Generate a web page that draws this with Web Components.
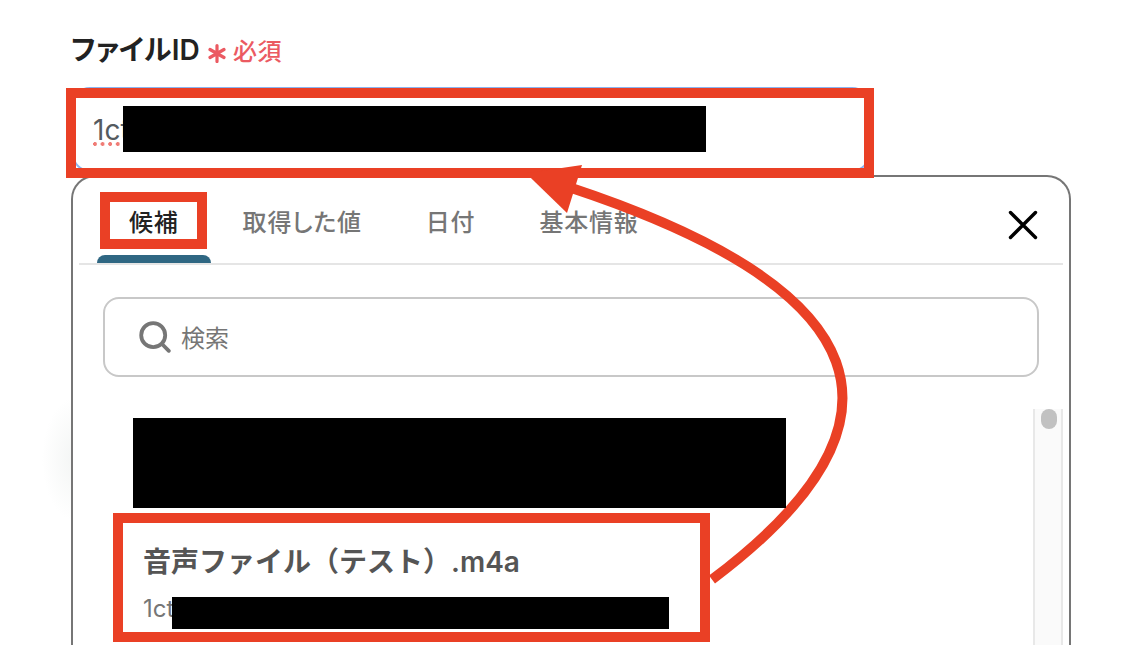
<!DOCTYPE html>
<html lang="ja">
<head>
<meta charset="utf-8">
<title>ファイルID</title>
<style>
  html, body {
    margin: 0;
    height: 645px;
    overflow: hidden;
    background: #fff;
  }

  body {
    position: relative;
    font-family: Inter, "Noto Sans CJK JP", sans-serif;
  }
</style>
</head>
<body>
<file-field>
  <field-label slot="label" note="必須">ファイルID</field-label>
  <text-input slot="input">1ct</text-input>
  <suggest-panel>
    <tab-bar slot="tabs">
      <tab-item active>候補</tab-item>
      <tab-item>取得した値</tab-item>
      <tab-item>日付</tab-item>
      <tab-item>基本情報</tab-item>
    </tab-bar>
    <search-box slot="search">検索</search-box>
    <file-option detail="1ct">音声ファイル（テスト）.m4a</file-option>
  </suggest-panel>
</file-field>
<mark-layer></mark-layer>

<script>
const define = (name, html, setup) => {
  const template = document.createElement('template');
  template.innerHTML = html;

  customElements.define(name, class extends HTMLElement {
    constructor() {
      super();
      const root = this.attachShadow({ mode: 'open' });
      root.appendChild(template.content.cloneNode(true));
      if (setup) setup(this, root);
    }
  });
};

define('file-field', `
  <style>
    :host {
      display: flex;
      flex-direction: column;
      width: 1000px;
      height: 645px;
      padding-left: 71px;
      background: radial-gradient(ellipse 34px 62px at 76px 459px, #f3f5f4, #fff);
    }
  </style>
  <slot name="label"></slot>
  <slot name="input"></slot>
  <slot></slot>
`);

define('field-label', `
  <style>
    :host {
      display: flex;
      flex: none;
      align-items: center;
      height: 40px;
      padding-top: 30px;
      margin-bottom: 17px;
      font-size: 28px;
      font-weight: 500;
      line-height: 40px;
      color: #222;
      white-space: nowrap;
    }

    .text {
      width: 137px;
      font-feature-settings: "palt";
      font-weight: 600;
      letter-spacing: 0.2px;
    }

    svg { margin: 6px 6px 0 0; }

    .note {
      font-size: 24px;
      color: #eb5a62;
      letter-spacing: 0.5px;
      margin-top: 4px;
    }
  </style>
  <span class="text"><slot></slot></span>
  <svg width="19" height="20" viewBox="0 0 19 20" fill="none" stroke="#eb5a62" stroke-width="3.2" stroke-linecap="round">
    <path d="M9 2.5V18.5M2 6.5L16 14.5M16 6.5L2 14.5"/>
  </svg>
  <span class="note"></span>
`, (el, root) => {
  root.querySelector('.note').textContent = el.getAttribute('note');
});

define('text-input', `
  <style>
    :host {
      display: flex;
      flex: none;
      align-items: center;
      box-sizing: border-box;
      width: 798px;
      height: 85px;
      margin: 0 0 3px 1px;
      padding: 0 0 0 19px;
      border: 2px solid #8ab4f0;
      border-radius: 18px;
      font-size: 28px;
      color: #555b60;
    }

    span {
      height: 29px;
      line-height: 32px;
      padding-bottom: 3px;
      background: radial-gradient(circle at 2px 2px, #f07c76 1.7px, transparent 2.2px) 0 100% / 7.6px 4px repeat-x;
    }
  </style>
  <span><slot></slot></span>
`);

define('suggest-panel', `
  <style>
    :host {
      display: flex;
      flex-direction: column;
      box-sizing: border-box;
      width: 1000px;
      height: 470px;
      flex: none;
      padding: 0 6px;
      border: 2px solid #767676;
      border-bottom: none;
      border-radius: 24px 24px 0 0;
      background: #fff;
    }

    .results {
      display: flex;
      justify-content: space-between;
      flex: 1;
      margin-top: 32px;
    }

    .list { padding: 131px 0 0 64px; }

    .track {
      display: flex;
      justify-content: center;
      width: 26px;
      border: solid #e8e8e8;
      border-width: 0 2px;
      background: #fafafa;
    }

    .thumb {
      width: 16px;
      height: 20px;
      margin-left: 2px;
      border-radius: 8px;
      background: #c1c1c1;
    }
  </style>
  <slot name="tabs"></slot>
  <slot name="search"></slot>
  <div class="results">
    <div class="list"><slot></slot></div>
    <div class="track"><div class="thumb"></div></div>
  </div>
`);

define('tab-bar', `
  <style>
    :host {
      display: flex;
      box-sizing: border-box;
      height: 88px;
      padding-left: 18px;
      border-bottom: 2px solid #e5e5e5;
    }

    svg { margin: 33px 25px 0 auto; }
  </style>
  <slot></slot>
  <svg width="30" height="30" viewBox="0 0 30 30" stroke="#000" stroke-width="3.4" stroke-linecap="round">
    <path d="M2.5 2.5L27.5 27.5M27.5 2.5L2.5 27.5"/>
  </svg>
`);

define('tab-item', `
  <style>
    :host {
      display: flex;
      flex-direction: column;
      justify-content: space-between;
      padding-top: 26px;
      font-size: 24px;
      font-weight: 500;
      line-height: 40px;
      letter-spacing: 0.8px;
      font-feature-settings: "palt";
      color: #767676;
      white-space: nowrap;
    }

    :host([active]) { color: #222; }

    span { padding: 0 32px; }

    i {
      height: 8px;
      border-radius: 8px 8px 0 0;
    }

    :host([active]) i { background: #2f6783; }
  </style>
  <span><slot></slot></span>
  <i></i>
`);

define('search-box', `
  <style>
    :host {
      display: flex;
      align-items: center;
      box-sizing: border-box;
      height: 80px;
      margin: 32px 24px 0;
      padding-left: 34px;
      border: 2px solid #c8c8c8;
      border-radius: 16px;
      font-size: 24px;
      color: #767676;
    }

    svg { margin-right: 10px; }

    span { margin-bottom: 2px; }
  </style>
  <svg width="32" height="32" viewBox="0 0 32 32" fill="none" stroke="#767676" stroke-width="3.8" stroke-linecap="round">
    <circle cx="14.2" cy="14.2" r="12"/>
    <path d="M23 23L29.8 29.8"/>
  </svg>
  <span><slot></slot></span>
`);

define('file-option', `
  <style>
    :host {
      display: block;
      color: #555;
    }

    .name {
      font-size: 28px;
      font-weight: 600;
      line-height: 44px;
    }

    .detail {
      font-size: 24px;
      line-height: 32px;
      margin-top: 9px;
      color: #767676;
    }
  </style>
  <div class="name"><slot></slot></div>
  <div class="detail"></div>
`, (el, root) => {
  root.querySelector('.detail').textContent = el.getAttribute('detail');
});

// frames, arrow and redaction bars lying over the form
define('mark-layer', `
  <style>
    :host {
      display: block;
      position: absolute;
      top: 0;
      left: 0;
      pointer-events: none;
    }

    svg { display: block; }
  </style>
  <svg width="1144" height="645" viewBox="0 0 1144 645">
    <g fill="none" stroke="#ea4025" stroke-width="10">
      <rect x="71" y="93" width="798" height="80"/>
      <rect x="105" y="197" width="97" height="47"/>
      <rect x="118" y="518" width="587" height="119"/>
      <path d="M712 579.5Q1031 340 570 187.5"/>
    </g>
    <path d="M526 173.3L582 165L567 213Z" fill="#ea4025"/>
    <rect x="123" y="106" width="583" height="46"/>
    <rect x="133" y="418" width="653" height="90"/>
    <rect x="172" y="597" width="497" height="32"/>
  </svg>
`);
</script>
</body>
</html>
